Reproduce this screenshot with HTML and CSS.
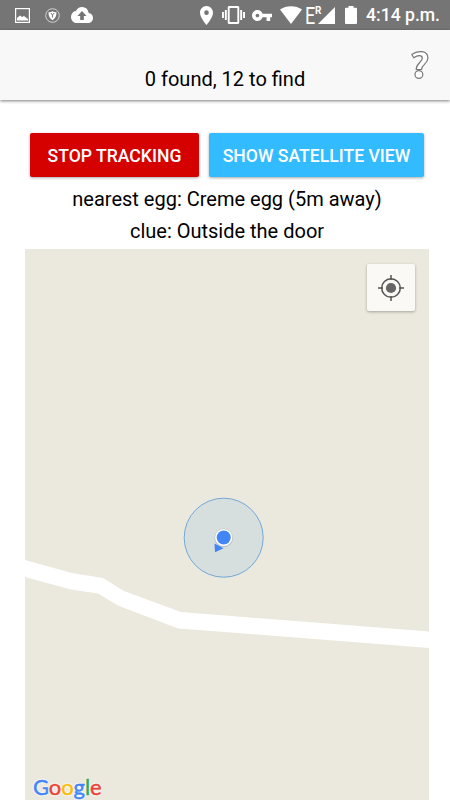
FILE: index.html
```
<!DOCTYPE html>
<html lang="en">

<head>
  <meta charset="UTF-8">
  <meta name="viewport" content="width=device-width, initial-scale=1.0">
  <title>Egg hunt</title>
  <link rel="stylesheet" href="styles.css">
</head>

<body>
  <div class="statusbar">
    <div class="notifications">
      <svg width="15" height="15" viewBox="0 0 15 15">
        <rect x="0.6" y="0.6" width="13.8" height="13.8" fill="none" stroke="#fff" stroke-width="1.2" />
        <path fill="#fff" d="M2 12.5V10l3-2.5 2 1.5 2-1 4 3v1.5z" />
      </svg>
      <svg width="15" height="15" viewBox="0 0 15 15">
        <circle cx="7.5" cy="7.5" r="6.8" fill="none" stroke="#ddd" stroke-width="0.9" />
        <path fill="#fff" d="M3.5 4.2c1.6 0 3-.3 4-1 1 .7 2.4 1 4 1 0 4-1.2 6.3-4 8-2.8-1.7-4-4-4-8z" />
        <path stroke="#757575" stroke-width="1" fill="none" d="M5.8 5l1.7 2 1.7-2M7.5 7v2.5" />
      </svg>
      <svg class="cloud" width="22" height="16" viewBox="0 4 24 16" preserveAspectRatio="none">
        <path fill="#fff" d="M19.35 10.04A7.49 7.49 0 0 0 12 4C9.11 4 6.6 5.64 5.35 8.04A5.994 5.994 0 0 0 0 14c0 3.31 2.69 6 6 6h13c2.76 0 5-2.24 5-5 0-2.64-2.05-4.78-4.65-4.96zM14 13v4h-4v-4H7l5-5 5 5h-3z" />
      </svg>
    </div>
    <div class="system">
      <svg width="13" height="19" viewBox="5 2 14 20" preserveAspectRatio="none">
        <path fill="#fff" d="M12 2C8.13 2 5 5.13 5 9c0 5.25 7 13 7 13s7-7.75 7-13c0-3.87-3.13-7-7-7zm0 9.5a2.5 2.5 0 0 1 0-5 2.5 2.5 0 0 1 0 5z" />
      </svg>
      <svg class="vibrate" width="23" height="18" viewBox="0 3 24 18" preserveAspectRatio="none">
        <path fill="#fff" d="M0 15h2V9H0v6zm3 2h2V7H3v10zm19-8v6h2V9h-2zm-3 8h2V7h-2v10zM16.5 3h-9C6.67 3 6 3.67 6 4.5v15c0 .83.67 1.5 1.5 1.5h9c.83 0 1.5-.67 1.5-1.5v-15c0-.83-.67-1.5-1.5-1.5zM16 19H8V5h8v14z" />
      </svg>
      <svg class="key" width="20" height="11" viewBox="1 6 22 12" preserveAspectRatio="none">
        <path fill="#fff" d="M12.65 10C11.83 7.67 9.61 6 7 6c-3.31 0-6 2.69-6 6s2.69 6 6 6c2.61 0 4.83-1.67 5.65-4H17v4h4v-4h2v-4H12.65zM7 14c-1.1 0-2-.9-2-2s.9-2 2-2 2 .9 2 2-.9 2-2 2z" />
      </svg>
      <svg class="wifi" width="22" height="18" viewBox="0 0 22 18">
        <path fill="#fff" d="M0 3.5C6-1 16-1 22 3.5L11 18z" />
      </svg>
      <span class="network">E</span>
      <span class="roaming">R</span>
      <svg class="signal" width="17" height="17" viewBox="0 0 17 17">
        <path fill="#fff" d="M17 0v17H0z" />
      </svg>
      <svg class="battery" width="12" height="18" viewBox="0 0 12 18">
        <path fill="#fff" d="M3.5 0h5v1.8H11q1 0 1 1V17q0 1-1 1H1q-1 0-1-1V2.8q0-1 1-1h2.5z" />
      </svg>
      <span class="time">4:14 p.m.</span>
    </div>
  </div>

  <div class="header">
    <div class="count">0 found, 12 to find</div>
    <svg class="help" width="20" height="30" viewBox="0 0 20 30">
      <g fill="#fff" stroke="#777" stroke-width="1.2" stroke-linejoin="round">
        <path d="M1.8 4.5C7.5.2 17.9.2 17.9 8c0 6-6.4 6.500-6.4 11.500H6.200c0-6.500 6.100-7.500 6.100-11.200 0-3.800-4.800-3.300-8.500-.5z" />
        <circle cx="8.9" cy="24.5" r="3.9" />
      </g>
    </svg>
  </div>

  <div class="content">
    <div class="boutons">
      <div class="bouton stop">Stop tracking</div>
      <div class="bouton satellite">Show satellite view</div>
    </div>
    <div class="info">nearest egg: Creme egg (5m away)</div>
    <div class="info">clue: Outside the door</div>

    <div class="map">
      <svg width="404" height="551" viewBox="0 0 404 551">
        <path fill="#fff" d="M0 311L47 324 78 329 99 342 156 363 200 366.5 405 382.5V399L200 383 153 379.5 93 356.5 73 344.5 46 340.5 0 328z" />
        <circle cx="198.7" cy="288.7" r="39.5" fill="#4a9fe8" fill-opacity="0.12" stroke="#73a9d8" stroke-width="1" />
        <path fill="#4285f4" d="M189.5 294.5l9 4.8-8.5 4z" />
        <circle cx="198.7" cy="288.9" r="9.3" fill="#000" fill-opacity="0.13" />
        <circle cx="198.7" cy="288.5" r="8.6" fill="#fff" />
        <circle cx="198.7" cy="288.5" r="7" fill="#4285f4" />
      </svg>
      <div class="locate">
        <svg width="26" height="26" viewBox="0 0 26 26">
          <g fill="none" stroke="#555" stroke-width="1.5">
            <circle cx="13" cy="13" r="9.3" />
            <path d="M13 0v5M13 21v5M0 13h5M21 13h5" />
          </g>
          <circle cx="13" cy="13" r="5.1" fill="#666" />
        </svg>
      </div>
      <div class="logo"><span class="blue">G</span><span class="red">o</span><span class="yellow">o</span><span class="blue">g</span><span class="green">l</span><span class="red">e</span></div>
    </div>
  </div>
</body>

</html>
```

FILE: styles.css
```
body {
  display: flex;
  flex-direction: column;
  height: 800px;
  margin: 0;
  overflow: hidden;
  background-color: #fff;
  color: #000;
  font-family: Roboto, sans-serif;
}

svg {
  display: block;
  flex: none;
}

.statusbar {
  display: flex;
  justify-content: space-between;
  box-sizing: border-box;
  height: 30px;
  padding: 0 11px 0 15px;
  background-color: #757575;
  color: #fff;
}

.notifications,
.system {
  display: flex;
  align-items: center;
}

.notifications {
  gap: 15px;
}

.cloud {
  margin-left: -4px;
}

.vibrate {
  margin-left: 9px;
}

.key {
  margin-left: 7px;
}

.wifi {
  margin-left: 8px;
}

.network {
  width: 10px;
  margin-left: 3px;
  font-size: 24px;
  line-height: 30px;
  padding-top: 1px;
  transform: scaleX(0.75);
  transform-origin: left;
}

.roaming {
  width: 6px;
  font-size: 10px;
  font-weight: 700;
  line-height: 12px;
  align-self: flex-start;
  padding-top: 5px;
}

.signal {
  margin-left: -3px;
}

.battery {
  margin-left: 10px;
}

.time {
  width: 73px;
  margin-left: 9px;
  font-size: 17.6px;
  font-weight: 500;
  line-height: 32px;
  white-space: nowrap;
}

.header {
  display: grid;
  grid-template-columns: 40px 1fr 40px;
  height: 70px;
  background-color: #f8f8f8;
  box-shadow: 0 1px 3px rgba(0, 0, 0, 0.5);
}

.count {
  grid-column: 2;
  padding-top: 37px;
  font-size: 20px;
  line-height: 24px;
  text-align: center;
}

.help {
  margin-top: 20px;
}

.content {
  display: flex;
  flex-direction: column;
  flex: 1;
  padding: 33px 21px 0 25px;
}

.boutons {
  display: flex;
  gap: 10px;
  padding-left: 5px;
  margin-bottom: 6px;
}

.bouton {
  height: 44px;
  border-radius: 2px;
  box-shadow: 0 1px 3px rgba(0, 0, 0, 0.35);
  color: #fff;
  font-size: 17.6px;
  font-weight: 500;
  line-height: 46px;
  text-align: center;
  text-transform: uppercase;
  white-space: nowrap;
}

.stop {
  width: 169px;
  background-color: #d50000;
}

.satellite {
  width: 215px;
  background-color: #33bbff;
}

.info {
  height: 32px;
  font-size: 20px;
  line-height: 33px;
  text-align: center;
}

.map {
  position: relative;
  flex: 1;
  margin-top: 2px;
  background-color: #ebe8dd;
}

.locate {
  position: absolute;
  top: 15px;
  right: 14px;
  display: grid;
  place-items: center;
  width: 48px;
  height: 47px;
  border-radius: 2px;
  background-color: #faf9f6;
  box-shadow: 0 1px 3px rgba(0, 0, 0, 0.3);
}

.logo {
  position: absolute;
  left: 8px;
  bottom: 0;
  font-family: Lato, sans-serif;
  font-size: 22px;
  font-weight: 400;
  line-height: 26px;
  letter-spacing: -0.1px;
  -webkit-text-stroke: 0.5px;
  text-shadow: 0 0 2px #fff, 0 0 2px #fff, 0 0 3px #fff;
}

.blue {
  color: #4285f4;
}

.red {
  color: #ea4335;
}

.yellow {
  color: #fbbc05;
}

.green {
  color: #34a853;
}
```
